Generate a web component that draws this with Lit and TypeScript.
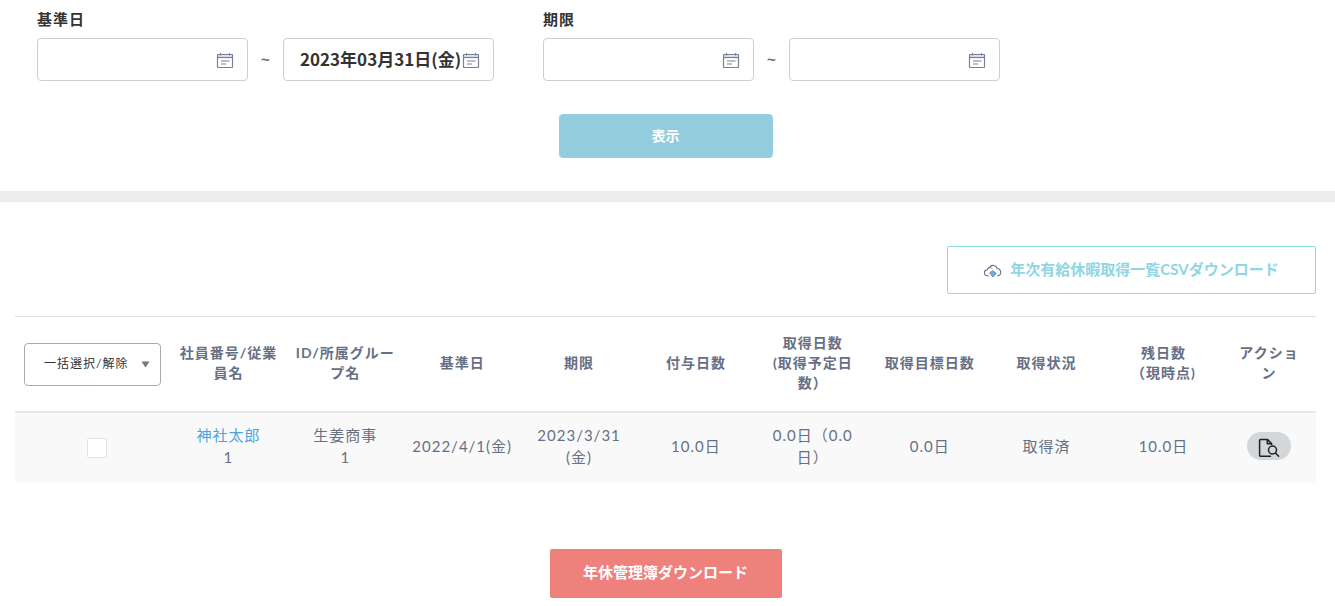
import { LitElement, html, css, svg } from "lit";
import { customElement, property } from "lit/decorators.js";

const calendarIcon = svg`
  <svg width="18" height="18" viewBox="0 0 18 18" fill="none" aria-hidden="true">
    <rect x="1.5" y="2.5" width="15" height="3" fill="#e3e5ea"/>
    <rect x="1.5" y="2.5" width="15" height="13" rx="0.5" stroke="#76809a" stroke-width="1.2"/>
    <path d="M1.5 5.5h15" stroke="#76809a" stroke-width="1.2"/>
    <path d="M4.5 1v2.5M13.5 1v2.5" stroke="#76809a" stroke-width="1.1"/>
    <path d="M5 9h8.5M5 12h5" stroke="#76809a" stroke-width="1.2"/>
  </svg>`;

const cloudIcon = svg`
  <svg width="18" height="14" viewBox="0 0 18 14" fill="none" stroke="#5f7390" stroke-width="1.1" stroke-linecap="round" aria-hidden="true">
    <path d="M4.3 11.8H3.6A3 3 0 0 1 3.2 5.8A3.2 3.2 0 0 1 5.6 3.4A4.2 4.2 0 0 1 13.2 4.5A3.8 3.8 0 0 1 14.4 11.8H13.7"/>
    <path d="M5.6 3.4C6.7 3.2 7.4 3.6 7.9 4.3" stroke-width="0.9"/>
    <path d="M9 7L12 9.3L9 12.8L6 9.3Z" fill="#6db3e8" stroke-width="1"/>
    <circle cx="9" cy="9.8" r="1.8" fill="#6db3e8" stroke="none"/>
  </svg>`;

const documentSearchIcon = svg`
  <svg width="22" height="20" viewBox="0 0 22 20" fill="none" stroke="#1d2126" stroke-width="1.5" stroke-linejoin="round" stroke-linecap="round" aria-hidden="true">
    <path d="M12.5 18.2H2.6A1 1 0 0 1 1.6 17.2V2.600A1 1 0 0 1 2.600 1.600H9.600L13.600 5.600V6.500"/>
    <path d="M9.3 1.8V5.8H13.4"/>
    <circle cx="14.5" cy="12" r="4"/>
    <path d="M17.500 15L20.600 18.200"/>
  </svg>`;

@customElement("date-field")
class DateField extends LitElement {
  @property() value = "";
  @property() label = "";

  static styles = css`
    :host {
      display: block;
      width: 211px;
    }
    .field {
      display: flex;
      align-items: center;
      box-sizing: border-box;
      height: 43px;
      padding: 0 13px 0 16px;
      border: 1px solid #cfcfcf;
      border-radius: 4px;
      background: #fff;
    }
    .text {
      flex: 1;
      min-width: 0;
      padding: 0 0 2px;
      border: 0;
      outline: 0;
      background: none;
      color: #333;
      font: 700 17px/24px "Noto Sans CJK JP", sans-serif;
    }
    .pick {
      display: flex;
      padding: 2px 0 0;
      border: 0;
      background: none;
      cursor: pointer;
    }
  `;

  render() {
    return html`
      <div class="field">
        <input class="text" type="text" aria-label=${this.label} .value=${this.value} />
        <button class="pick" type="button" aria-label="カレンダー">${calendarIcon}</button>
      </div>
    `;
  }
}

@customElement("app-root")
class AppRoot extends LitElement {
  private headings = [
    ["社員番号/従業", "員名"],
    ["ID/所属グルー", "プ名"],
    ["基準日"],
    ["期限"],
    ["付与日数"],
    ["取得日数", "(取得予定日", "数）"],
    ["取得目標日数"],
    ["取得状況"],
    ["残日数", "（現時点)"],
    ["アクショ", "ン"],
  ];

  private cells = [
    ["生姜商事", "1"],
    ["2022/4/1(金)"],
    ["2023/3/31", "(金)"],
    ["10.0日"],
    ["0.0日（0.0", "日）"],
    ["0.0日"],
    ["取得済"],
    ["10.0日"],
  ];

  static styles = css`
    :host {
      display: block;
      background: #fff;
      color: #667085;
      font-family: Lato, "Noto Sans CJK JP", sans-serif;
      font-size: 15px;
    }
    .search {
      padding: 7px 41px 33px 37px;
      border-bottom: 11px solid #ecedef;
    }
    .filters {
      display: flex;
      flex-wrap: wrap;
      gap: 24px 49px;
    }
    .range {
      margin: 0;
      padding: 0;
      border: 0;
    }
    .range legend {
      padding: 0;
      margin-bottom: 7px;
      color: #333;
      font-weight: 700;
      line-height: 24px;
      letter-spacing: 1px;
    }
    .pair {
      display: flex;
      align-items: center;
    }
    .tilde {
      width: 35px;
      text-align: center;
      font-family: "Liberation Sans", sans-serif;
      font-weight: 700;
    }
    .submit {
      display: block;
      width: 214px;
      height: 44px;
      margin: 33px auto 0;
      padding: 0 0 2px;
      border: 1px solid #8cd0e0;
      border-radius: 4px;
      background: #93cddd;
      color: #fff;
      font: 700 14px/20px "Noto Sans CJK JP", sans-serif;
    }
    .results {
      padding: 44px 19px 9px 15px;
    }
    .toolbar {
      display: flex;
      justify-content: flex-end;
      margin-bottom: 22px;
    }
    .csv {
      display: flex;
      align-items: center;
      justify-content: center;
      gap: 8px;
      width: 369px;
      height: 48px;
      padding: 0 0 3px;
      border: 1px solid #8fd8e4;
      border-radius: 2px;
      background: #fff;
      color: #8ed6e4;
      font: 700 15px/20px Lato, "Noto Sans CJK JP", sans-serif;
    }
    .csv svg {
      margin-top: 4px;
    }
    .table {
      width: 100%;
      table-layout: fixed;
      border-collapse: collapse;
      text-align: center;
      letter-spacing: 1px;
    }
    .col-select {
      width: 155px;
    }
    .col-action {
      width: 94px;
    }
    th {
      height: 92px;
      padding: 0 0 2px;
      border-top: 1px solid #dfdfdf;
      border-bottom: 2px solid #e6e7e8;
      font-size: 14px;
      line-height: 20px;
    }
    td {
      height: 66px;
      padding: 0 0 4px;
      background: #f9f9f9;
      line-height: 22px;
    }
    .name {
      color: #4aa3df;
      text-decoration: none;
    }
    .bulk {
      display: grid;
      align-items: center;
      margin: 2px 9px 0;
    }
    .bulk select {
      grid-area: 1 / 1;
      appearance: none;
      box-sizing: border-box;
      width: 100%;
      height: 43px;
      padding: 0 20px 0 19px;
      border: 1px solid #aaa;
      border-radius: 4px;
      background: #fff;
      color: #333;
      font: 400 12px/20px Lato, "Noto Sans CJK JP", sans-serif;
      letter-spacing: 1px;
    }
    .bulk svg {
      grid-area: 1 / 1;
      justify-self: end;
      margin-right: 11px;
      pointer-events: none;
    }
    .check {
      appearance: none;
      box-sizing: border-box;
      width: 20px;
      height: 20px;
      margin: 0 0 0 8px;
      border: 1px solid #e0e3e8;
      border-radius: 2px;
      background: #fff;
      vertical-align: middle;
    }
    .check:checked {
      background: #93cddd;
    }
    .detail {
      display: inline-flex;
      align-items: center;
      justify-content: center;
      width: 44px;
      height: 28px;
      padding: 3px 0 0;
      border: 0;
      border-radius: 14px;
      background: #d3d7da;
      vertical-align: middle;
    }
    .ledger {
      display: block;
      width: 232px;
      height: 49px;
      margin: 66px auto 0;
      padding: 0 0 3px;
      border: 0;
      border-radius: 2px;
      background: #ee817c;
      color: #fff;
      font: 700 15px/20px "Noto Sans CJK JP", sans-serif;
    }
  `;

  private lines(parts: string[]) {
    return parts.map((part, i) => (i ? html`<br />${part}` : part));
  }

  private range(title: string, from: string, to: string) {
    return html`
      <fieldset class="range">
        <legend>${title}</legend>
        <div class="pair">
          <date-field label="${title} 開始" .value=${from}></date-field>
          <span class="tilde">~</span>
          <date-field label="${title} 終了" .value=${to}></date-field>
        </div>
      </fieldset>
    `;
  }

  render() {
    return html`
      <section class="search">
        <div class="filters">
          ${this.range("基準日", "", "2023年03月31日(金)")}
          ${this.range("期限", "", "")}
        </div>
        <button class="submit" type="button">表示</button>
      </section>
      <section class="results">
        <div class="toolbar">
          <button class="csv" type="button">${cloudIcon}<span>年次有給休暇取得一覧CSVダウンロード</span></button>
        </div>
        <table class="table">
          <colgroup>
            <col class="col-select" />
            <col span="9" />
            <col class="col-action" />
          </colgroup>
          <thead>
            <tr>
              <th>
                <div class="bulk">
                  <select aria-label="一括選択/解除"><option>一括選択/解除</option></select>
                  <svg width="9" height="7" viewBox="0 0 9 7" aria-hidden="true">
                    <path d="M0.5 0.5H8.5L4.5 6.5Z" fill="#777"/>
                  </svg>
                </div>
              </th>
              ${this.headings.map((h) => html`<th scope="col">${this.lines(h)}</th>`)}
            </tr>
          </thead>
          <tbody>
            <tr>
              <td><input class="check" type="checkbox" aria-label="神社太郎" /></td>
              <td><a class="name" href="#">神社太郎</a><br />1</td>
              ${this.cells.map((c) => html`<td>${this.lines(c)}</td>`)}
              <td><button class="detail" type="button" aria-label="詳細">${documentSearchIcon}</button></td>
            </tr>
          </tbody>
        </table>
        <button class="ledger" type="button">年休管理簿ダウンロード</button>
      </section>
    `;
  }
}
